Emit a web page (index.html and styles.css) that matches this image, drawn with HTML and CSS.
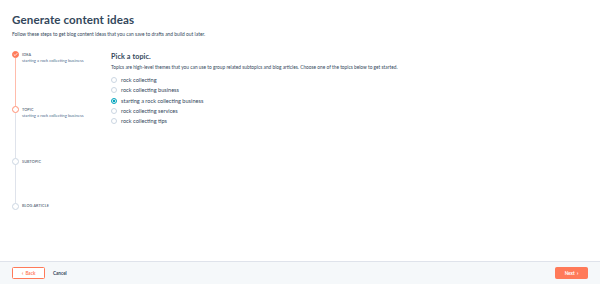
FILE: index.html
```html
<!DOCTYPE html>
<html lang="en">
<head>
<meta charset="utf-8">
<title>Generate content ideas</title>
<link rel="stylesheet" href="styles.css">
</head>
<body>
<div class="page">
  <div class="content">
    <h1 class="title">Generate content ideas</h1>
    <p class="subtitle">Follow these steps to get blog content ideas that you can save to drafts and build out later.</p>
    <div class="main">
      <ol class="stepper">
        <li class="step step-done step-h1">
          <div class="marker">
            <span class="dot dot-done">
              <svg viewBox="0 0 8 8" width="5" height="5"><path d="M1.6 4.2 L3.3 5.8 L6.4 2.4" fill="none" stroke="#fff" stroke-width="1.3" stroke-linecap="round" stroke-linejoin="round"/></svg>
            </span>
            <span class="line line-active"></span>
          </div>
          <div class="step-text">
            <div class="step-name">IDEA</div>
            <div class="step-value">starting a rock collecting business</div>
          </div>
        </li>
        <li class="step step-current step-h2">
          <div class="marker">
            <span class="dot dot-current"></span>
            <span class="line"></span>
          </div>
          <div class="step-text">
            <div class="step-name">TOPIC</div>
            <div class="step-value">starting a rock collecting business</div>
          </div>
        </li>
        <li class="step step-h3">
          <div class="marker">
            <span class="dot"></span>
            <span class="line"></span>
          </div>
          <div class="step-text">
            <div class="step-name">SUBTOPIC</div>
          </div>
        </li>
        <li class="step step-last">
          <div class="marker">
            <span class="dot"></span>
          </div>
          <div class="step-text">
            <div class="step-name">BLOG ARTICLE</div>
          </div>
        </li>
      </ol>
      <section class="panel">
        <h2 class="panel-title">Pick a topic.</h2>
        <p class="panel-desc">Topics are high-level themes that you can use to group related subtopics and blog articles. Choose one of the topics below to get started.</p>
        <ul class="options">
          <li class="option"><span class="radio"></span><span class="option-label">rock collecting</span></li>
          <li class="option"><span class="radio"></span><span class="option-label">rock collecting business</span></li>
          <li class="option"><span class="radio radio-on"></span><span class="option-label">starting a rock collecting business</span></li>
          <li class="option"><span class="radio"></span><span class="option-label">rock collecting services</span></li>
          <li class="option"><span class="radio"></span><span class="option-label">rock collecting tips</span></li>
        </ul>
      </section>
    </div>
  </div>
  <footer class="footer">
    <div class="footer-left">
      <button class="btn btn-secondary"><span class="chev">&#8249;</span> Back</button>
      <button class="btn-link">Cancel</button>
    </div>
    <button class="btn btn-primary">Next <span class="chev">&#8250;</span></button>
  </footer>
</div>
</body>
</html>
```
FILE: styles.css
```css
* { box-sizing: border-box; }
html, body { margin: 0; padding: 0; }
body {
  font-family: "Lato", "Open Sans", sans-serif;
  color: #33475b;
  background: #fff;
}
.page {
  height: 284px;
  display: flex;
  flex-direction: column;
}
.content {
  flex: 1;
  padding: 0 12px;
}
.title {
  margin: 13px 0 0;
  font-size: 11.6px;
  line-height: 14px;
  font-weight: 700;
  color: #33475b;
  letter-spacing: 0.1px;
}
.subtitle {
  margin: 4px 0 0;
  font-size: 4.9px;
  line-height: 6px;
  color: #33475b;
}
.main {
  display: flex;
  margin-top: 14px;
}
.stepper {
  list-style: none;
  margin: 0;
  padding: 0;
  width: 99px;
  flex: none;
}
.step {
  display: flex;
  gap: 3px;
}
.step-h1 { height: 55px; }
.step-h2 { height: 52px; }
.step-h3 { height: 44.5px; }
.marker {
  width: 7px;
  display: flex;
  flex-direction: column;
  align-items: center;
  flex: none;
}
.dot {
  width: 7px;
  height: 7px;
  border-radius: 50%;
  border: 1px solid #cbd6e2;
  background: #fff;
  flex: none;
  display: flex;
  align-items: center;
  justify-content: center;
}
.dot-done {
  background: #ff7a59;
  border-color: #ff7a59;
}
.dot-current {
  border-color: #ff8f73;
}
.line {
  width: 1px;
  flex: 1;
  background: #dfe3eb;
}
.line-active { background: #ffbcac; }
.step-text {
  padding-top: 0.5px;
}
.step-name {
  font-size: 3.8px;
  line-height: 5px;
  color: #33475b;
  letter-spacing: 0.1px;
}
.step-value {
  margin-top: 1.5px;
  font-size: 4.2px;
  line-height: 5px;
  color: #516f90;
}
.panel {
  flex: 1;
}
.panel-title {
  margin: 1px 0 0;
  font-size: 7.2px;
  line-height: 9px;
  font-weight: 700;
  color: #33475b;
  letter-spacing: 0.1px;
}
.panel-desc {
  margin: 3px 0 0;
  font-size: 4.8px;
  line-height: 6px;
  color: #33475b;
}
.options {
  list-style: none;
  margin: 7px 0 0;
  padding: 0;
  display: flex;
  flex-direction: column;
  gap: 4.25px;
}
.option {
  display: flex;
  align-items: center;
  gap: 4px;
  height: 6px;
}
.radio {
  width: 6px;
  height: 6px;
  border-radius: 50%;
  border: 0.7px solid #cbd6e2;
  background: #fff;
  flex: none;
}
.radio-on {
  border: 0.8px solid #00a4bd;
  background: radial-gradient(circle, #00a4bd 0 1.3px, #e5f5f8 1.6px);
}
.option-label {
  font-size: 5.6px;
  line-height: 6px;
  color: #33475b;
}
.footer {
  height: 23px;
  flex: none;
  background: #f5f8fa;
  border-top: 1px solid #dfe3eb;
  display: flex;
  align-items: center;
  justify-content: space-between;
  padding: 0 12px;
}
.footer-left {
  display: flex;
  align-items: center;
  gap: 8px;
}
.btn {
  width: 33px;
  height: 12px;
  border-radius: 1.5px;
  font-family: inherit;
  font-size: 4.6px;
  font-weight: 700;
  display: flex;
  align-items: center;
  justify-content: center;
  gap: 2px;
  padding: 0;
  cursor: pointer;
}
.btn-secondary {
  background: #fff;
  border: 0.8px solid #ff7a59;
  color: #ff7a59;
}
.btn-primary {
  background: #ff7a59;
  border: 0.8px solid #ff7a59;
  color: #fff;
}
.chev { font-size: 6px; line-height: 1; margin-top: -0.5px; }
.btn-link {
  background: none;
  border: 0;
  padding: 0;
  font-family: inherit;
  font-size: 4.6px;
  font-weight: 700;
  color: #33475b;
  cursor: pointer;
}
```
